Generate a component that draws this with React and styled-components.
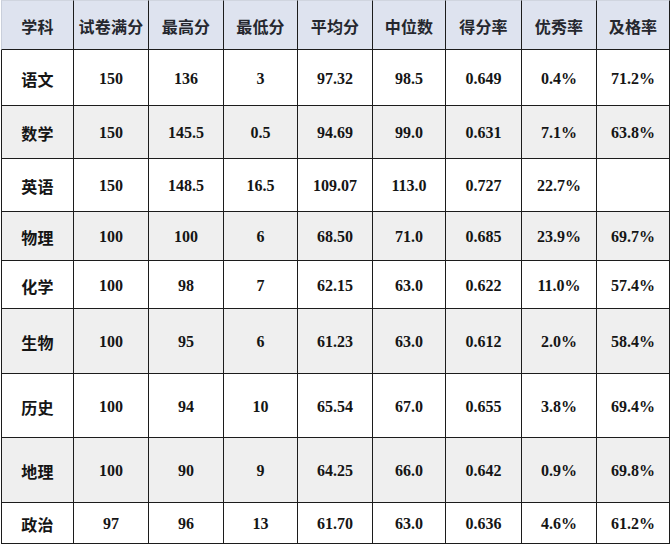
import React from "react";
import styled, { createGlobalStyle } from "styled-components";

const Global = createGlobalStyle`
  html, body { margin: 0; padding: 0; background: #ffffff; }
  body { width: 672px; height: 546px; overflow: hidden; }
`;

const COLS = [73, 75, 75, 74, 75, 73, 76, 75, 73];
const HEAD_H = 50;
const ROWS = [56, 53, 53, 49, 48, 65, 64, 65, 41];

const headers = ["学科", "试卷满分", "最高分", "最低分", "平均分", "中位数", "得分率", "优秀率", "及格率"];
const data = [
  ["语文", "150", "136", "3", "97.32", "98.5", "0.649", "0.4%", "71.2%"],
  ["数学", "150", "145.5", "0.5", "94.69", "99.0", "0.631", "7.1%", "63.8%"],
  ["英语", "150", "148.5", "16.5", "109.07", "113.0", "0.727", "22.7%", ""],
  ["物理", "100", "100", "6", "68.50", "71.0", "0.685", "23.9%", "69.7%"],
  ["化学", "100", "98", "7", "62.15", "63.0", "0.622", "11.0%", "57.4%"],
  ["生物", "100", "95", "6", "61.23", "63.0", "0.612", "2.0%", "58.4%"],
  ["历史", "100", "94", "10", "65.54", "67.0", "0.655", "3.8%", "69.4%"],
  ["地理", "100", "90", "9", "64.25", "66.0", "0.642", "0.9%", "69.8%"],
  ["政治", "97", "96", "13", "61.70", "63.0", "0.636", "4.6%", "61.2%"],
];

const Page = styled.div`
  padding: 0 0 0 1px;
`;

const Grid = styled.div`
  display: grid;
  width: 670px;
  grid-template-columns: ${COLS.map((c) => c + "px").join(" ")};
  grid-template-rows: ${HEAD_H}px ${ROWS.map((r) => r + "px").join(" ")};
`;

const Cell = styled.div`
  box-sizing: border-box;
  display: flex;
  align-items: center;
  justify-content: center;
  border-right: 1px solid #1c1c1c;
  border-bottom: 1px solid #1c1c1c;
  border-left: ${(p) => (p.$first ? "1px solid " + (p.$head ? "#c9cfdb" : "#1c1c1c") : "none")};
  border-top: ${(p) => (p.$head ? "1px solid #d0d5df" : "none")};
  background: ${(p) => (p.$head ? "#dee3ef" : p.$alt ? "#efefef" : "#ffffff")};
  color: ${(p) => (p.$head ? "#25272e" : "#151515")};
  font-family: ${(p) =>
    p.$num
      ? '"Liberation Serif", "Times New Roman", serif'
      : '"Noto Sans CJK SC", "Noto Sans", sans-serif'};
  font-weight: 700;
  font-size: 16px;
  letter-spacing: ${(p) => (p.$num ? "0" : "0.2px")};
  padding-top: ${(p) => (p.$head ? "1px" : "2px")};
`;

export default function App() {
  return (
    <>
      <Global />
      <Page>
        <Grid>
          {headers.map((h, i) => (
            <Cell key={"h" + i} $head $first={i === 0}>
              {h}
            </Cell>
          ))}
          {data.map((row, r) =>
            row.map((v, c) => (
              <Cell key={r + "-" + c} $first={c === 0} $alt={r % 2 === 1} $num={c !== 0}>
                {v}
              </Cell>
            ))
          )}
        </Grid>
      </Page>
    </>
  );
}
